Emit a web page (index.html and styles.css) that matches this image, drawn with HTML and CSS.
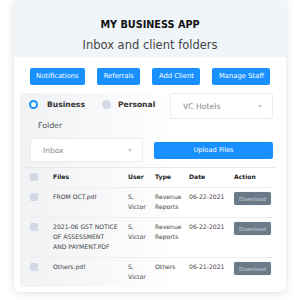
FILE: index.html
```html
<!DOCTYPE html>
<html>
<head>
<meta charset="utf-8">
<link rel="stylesheet" href="styles.css">
</head>
<body>
<div class="card">
  <div class="header">
    <div class="title">MY BUSINESS APP</div>
    <div class="subtitle">Inbox and client folders</div>
  </div>
  <div class="actions">
    <button class="btn">Notifications</button>
    <button class="btn">Referrals</button>
    <button class="btn">Add Client</button>
    <button class="btn">Manage Staff</button>
  </div>
  <div class="panel">
    <div class="top-row">
      <div class="radios">
        <span class="radio on"></span><span class="radio-label">Business</span>
        <span class="radio off"></span><span class="radio-label">Personal</span>
      </div>
      <div class="select client">VC Hotels<span class="caret"></span></div>
    </div>
    <div class="label">Folder</div>
    <div class="folder-row">
      <div class="select folder">Inbox<span class="caret"></span></div>
      <button class="btn upload">Upload Files</button>
    </div>
    <div class="divider"></div>
    <div class="table">
      <div class="tr head">
        <div class="td"><span class="check"></span></div>
        <div class="td files">Files</div>
        <div class="td user">User</div>
        <div class="td type">Type</div>
        <div class="td">Date</div>
        <div class="td">Action</div>
      </div>
      <div class="tr">
        <div class="td"><span class="check"></span></div>
        <div class="td files">FROM OCT.pdf</div>
        <div class="td user">S, Victor</div>
        <div class="td type">Revenue Reports</div>
        <div class="td">06-22-2021</div>
        <div class="td"><button class="dl">Download</button></div>
      </div>
      <div class="tr">
        <div class="td"><span class="check"></span></div>
        <div class="td files">2021-06 GST NOTICE OF ASSESSMENT AND PAYMENT.PDF</div>
        <div class="td user">S, Victor</div>
        <div class="td type">Revenue Reports</div>
        <div class="td">06-22-2021</div>
        <div class="td"><button class="dl">Download</button></div>
      </div>
      <div class="tr">
        <div class="td"><span class="check"></span></div>
        <div class="td files">Others.pdf</div>
        <div class="td user">S, Victor</div>
        <div class="td type">Others</div>
        <div class="td">06-21-2021</div>
        <div class="td"><button class="dl">Download</button></div>
      </div>
    </div>
  </div>
</div>
</body>
</html>
```

FILE: styles.css
```css
* { box-sizing: border-box; }
html, body { margin: 0; padding: 0; background: #fff; }
body { font-family: "DejaVu Sans", sans-serif; width: 300px; height: 300px; overflow: hidden; }

.card {
  margin: 0 14px;
  width: 272px;
  height: 292px;
  border-radius: 0 0 6px 6px;
  box-shadow: 0 1px 8px rgba(0,0,0,0.13);
  background: #fff;
  padding-bottom: 5px;
  display: flex;
  flex-direction: column;
}

.header {
  height: 57px;
  background: #f0f5fa;
  display: flex;
  flex-direction: column;
  align-items: center;
  padding-top: 19px;
}
.title { font-weight: bold; font-size: 9.7px; line-height: 12px; color: #111; }
.subtitle { font-size: 11.5px; line-height: 14px; color: #444; margin-top: 7px; }

.actions {
  display: flex;
  justify-content: center;
  gap: 12px;
  margin-top: 11px;
}
.btn {
  font-family: "DejaVu Sans", sans-serif;
  height: 17px;
  padding: 0 6.5px;
  border: 0;
  border-radius: 2px;
  background: #1890ff;
  color: #fff;
  font-size: 6.8px;
  line-height: 17px;
}

.panel {
  margin: 8px 6px 0;
  flex: 1;
  padding: 0 7px 0 10px;
  background: linear-gradient(to right, #f1f2f4, #fbfbfc 45%, #fff 60%);
}

.top-row {
  height: 26px;
  display: flex;
  align-items: center;
  justify-content: space-between;
}
.radios { display: flex; align-items: center; margin-top: -4px; margin-left: -1px; }
.radio {
  width: 9px; height: 9px; border-radius: 50%; display: inline-block;
}
.radio.on { border: 2.8px solid #1890ff; background: #fff; }
.radio.off { background: #d3d8e6; margin-left: 17px; }
.radio-label { font-size: 7.6px; font-weight: bold; color: #333; margin-left: 9px; }
.radio.off + .radio-label { margin-left: 7px; }

.select {
  position: relative;
  height: 26px;
  border: 1px solid #ececec;
  border-radius: 2px;
  background: #fff;
  font-size: 7.7px;
  color: #888;
  display: flex;
  align-items: center;
  padding-left: 12px;
}
.select.client { width: 103px; }
.select.folder { width: 113px; height: 24px; font-size: 7.5px; }
.caret {
  position: absolute;
  right: 10px;
  top: 50%;
  margin-top: -1px;
  width: 0; height: 0;
  border-left: 2.5px solid transparent;
  border-right: 2.5px solid transparent;
  border-top: 3px solid #c8c8c8;
}

.label { font-size: 7.8px; line-height: 10px; color: #555; margin-top: 2px; margin-left: 8px; }

.folder-row {
  display: flex;
  align-items: center;
  gap: 11px;
  margin-top: 7px;
}
.upload { width: 119px; font-size: 6.7px; }

.divider { height: 1px; background: #e6eaef; margin: 5px -3px 0 -5px; }

.table { font-size: 6.1px; line-height: 10px; color: #444; }
.tr {
  display: grid;
  grid-template-columns: 23px 75px 27px 34px 45px 39px;
  padding: 4px 0 5px;
  border-top: 1px solid #eceef1;
}
.tr.head { border-top: 0; font-weight: bold; color: #222; }
.td.files { padding-right: 9.5px; }
.td.user { padding-right: 3px; }
.td.type { padding-right: 2px; }
.check {
  display: block;
  width: 7.5px; height: 7.5px;
  margin-top: 1px;
  border-radius: 1px;
  background: #d3d8e4;
}
.dl {
  font-family: "DejaVu Sans", sans-serif;
  width: 37px;
  height: 13px;
  border: 0;
  border-radius: 2px;
  background: #6b7a88;
  color: #c9d1d8;
  font-size: 5.4px;
  padding: 0;
  box-shadow: 0 0 1px rgba(0,0,0,0.3);
}
```
